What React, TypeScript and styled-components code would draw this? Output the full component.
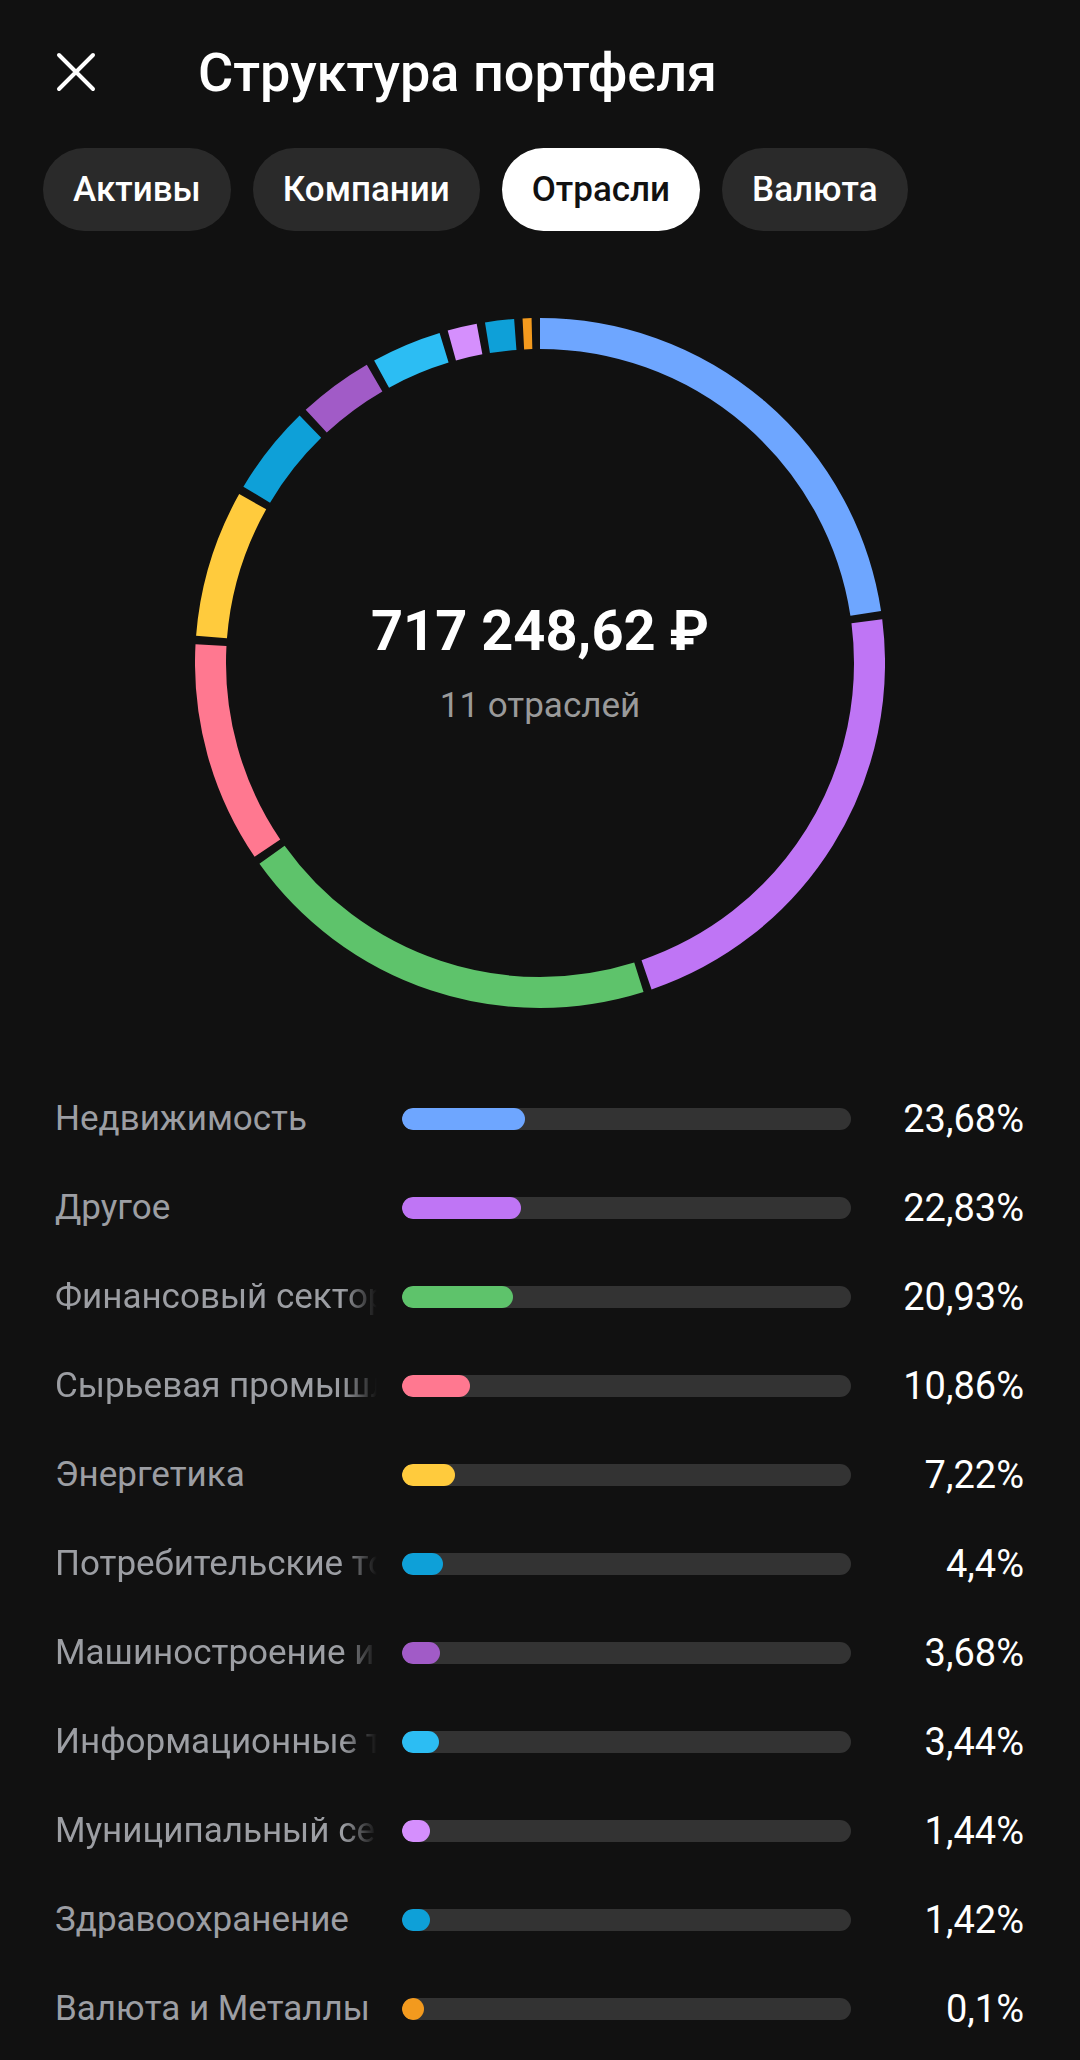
import React from 'react';
import styled, { createGlobalStyle, css } from 'styled-components';

type Sector = {
  name: string;
  pct: number;
  color: string;
  clipped?: boolean;
};

const sectors: Sector[] = [
  { name: 'Недвижимость', pct: 23.68, color: '#6ea6ff' },
  { name: 'Другое', pct: 22.83, color: '#bf75f5' },
  { name: 'Финансовый сектор', pct: 20.93, color: '#5ec36b', clipped: true },
  { name: 'Сырьевая промышленность', pct: 10.86, color: '#ff7890', clipped: true },
  { name: 'Энергетика', pct: 7.22, color: '#ffcb3d' },
  { name: 'Потребительские товары', pct: 4.4, color: '#0ea0d8', clipped: true },
  { name: 'Машиностроение и транспорт', pct: 3.68, color: '#a15bc7', clipped: true },
  { name: 'Информационные технологии', pct: 3.44, color: '#2cbdf3', clipped: true },
  { name: 'Муниципальный сектор', pct: 1.44, color: '#d58ffd', clipped: true },
  { name: 'Здравоохранение', pct: 1.42, color: '#0ea0d8' },
  { name: 'Валюта и Металлы', pct: 0.1, color: '#f39a1e' },
];

const tabs = ['Активы', 'Компании', 'Отрасли', 'Валюта'];

const GlobalStyle = createGlobalStyle`
  body {
    margin: 0;
    background: #111111;
    font-family: Roboto, "Noto Sans", sans-serif;
    color: #ffffff;
  }
`;

const Page = styled.div`
  width: 1080px;
  min-height: 2060px;
  background: #111111;
`;

const Header = styled.header`
  display: flex;
  align-items: center;
  height: 144px;
  padding-left: 56px;
  gap: 102px;
`;

const CloseButton = styled.button`
  display: flex;
  padding: 0;
  border: none;
  background: none;
  color: #ffffff;
`;

const Title = styled.h1`
  margin: 0;
  font-size: 54px;
  font-weight: 500;
`;

const Tabs = styled.nav`
  display: flex;
  gap: 22px;
  margin-top: 4px;
  padding-left: 43px;
`;

const Chip = styled.button<{ $active?: boolean }>`
  height: 83px;
  padding: 0 30px;
  border: none;
  border-radius: 42px;
  font-family: Roboto, sans-serif;
  font-size: 35px;
  font-weight: 500;
  background: #2a2a2a;
  color: #ffffff;

  ${(p) =>
    p.$active &&
    css`
      background: #ffffff;
      color: #111111;
    `}
`;

const DonutWrap = styled.div`
  display: grid;
  width: 690px;
  height: 690px;
  margin: 87px auto 0;

  & > * {
    grid-area: 1 / 1;
  }
`;

const Center = styled.div`
  display: flex;
  flex-direction: column;
  align-items: center;
  justify-content: center;
`;

const Amount = styled.div`
  font-size: 56px;
  line-height: 56px;
  font-weight: 700;
`;

const Count = styled.div`
  margin-top: 29px;
  font-size: 35px;
  line-height: 35px;
  color: #9a9a9a;
`;

const List = styled.div`
  margin-top: 66px;
`;

const Row = styled.div`
  display: grid;
  grid-template-columns: 322px 449px 1fr;
  column-gap: 25px;
  align-items: center;
  height: 89px;
  padding: 0 56px 0 55px;
`;

const Label = styled.div<{ $clipped?: boolean }>`
  font-size: 35px;
  color: #9c9ea3;
  white-space: nowrap;
  overflow: hidden;

  ${(p) =>
    p.$clipped &&
    css`
      mask-image: linear-gradient(to right, #000 calc(100% - 34px), transparent);
    `}
`;

const Track = styled.div`
  height: 22px;
  border-radius: 11px;
  background: #333333;
  overflow: hidden;
`;

const Fill = styled.div<{ $color: string }>`
  height: 100%;
  border-radius: 11px;
  background: ${(p) => p.$color};
`;

const Percent = styled.div`
  text-align: right;
  font-size: 38px;
  color: #ffffff;
`;

const SIZE = 690;
const STROKE = 31;
const R = SIZE / 2 - STROKE / 2;
const GAP = 1.4;
const MIN_ARC = 1.5;

function point(angle: number) {
  const a = ((angle - 90) * Math.PI) / 180;
  return [SIZE / 2 + R * Math.cos(a), SIZE / 2 + R * Math.sin(a)];
}

function arcPath(from: number, to: number) {
  const [x1, y1] = point(from);
  const [x2, y2] = point(to);
  const large = to - from > 180 ? 1 : 0;
  return `M ${x1} ${y1} A ${R} ${R} 0 ${large} 1 ${x2} ${y2}`;
}

function Donut({ items }: { items: Sector[] }) {
  const avail = 360 - GAP * items.length;
  const small = items.filter((s) => (s.pct / 100) * avail < MIN_ARC);
  const rest = 100 - small.reduce((sum, s) => sum + s.pct, 0);
  const k = (avail - small.length * MIN_ARC) / rest;

  let angle = 0;
  return (
    <svg width={SIZE} height={SIZE} viewBox={`0 0 ${SIZE} ${SIZE}`}>
      {items.map((s) => {
        const arc = small.includes(s) ? MIN_ARC : s.pct * k;
        const d = arcPath(angle, angle + arc);
        angle += arc + GAP;
        return <path key={s.name} d={d} stroke={s.color} strokeWidth={STROKE} fill="none" />;
      })}
    </svg>
  );
}

const fmt = (n: number) => `${String(n).replace('.', ',')}%`;

export default function App() {
  return (
    <Page>
      <GlobalStyle />
      <Header>
        <CloseButton>
          <svg width="40" height="40" viewBox="0 0 40 40">
            <path d="M3 3 L37 37 M37 3 L3 37" stroke="currentColor" strokeWidth="4" strokeLinecap="round" />
          </svg>
        </CloseButton>
        <Title>Структура портфеля</Title>
      </Header>

      <Tabs>
        {tabs.map((t) => (
          <Chip key={t} $active={t === 'Отрасли'}>
            {t}
          </Chip>
        ))}
      </Tabs>

      <DonutWrap>
        <Donut items={sectors} />
        <Center>
          <Amount>717 248,62 ₽</Amount>
          <Count>11 отраслей</Count>
        </Center>
      </DonutWrap>

      <List>
        {sectors.map((s) => (
          <Row key={s.name}>
            <Label $clipped={s.clipped}>{s.name}</Label>
            <Track>
              <Fill $color={s.color} style={{ width: `calc(22px + (100% - 22px) * ${s.pct / 100})` }} />
            </Track>
            <Percent>{fmt(s.pct)}</Percent>
          </Row>
        ))}
      </List>
    </Page>
  );
}
